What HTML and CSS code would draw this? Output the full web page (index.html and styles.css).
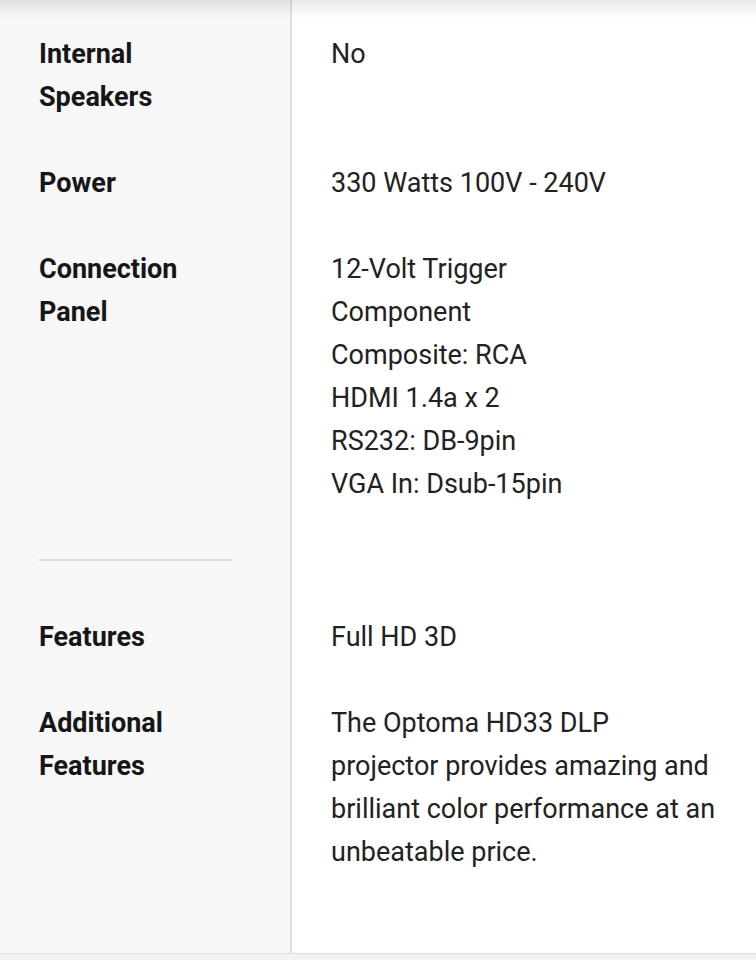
FILE: index.html
```html
<!DOCTYPE html>
<html lang="en">
<head>
<meta charset="utf-8">
<title>Specifications</title>
<link rel="stylesheet" href="styles.css">
</head>
<body>
<div class="specs">
  <div class="row first">
    <div class="label">Internal<br>Speakers</div>
    <div class="value">No</div>
  </div>
  <div class="row">
    <div class="label">Power</div>
    <div class="value">330 Watts 100V - 240V</div>
  </div>
  <div class="row">
    <div class="label">Connection<br>Panel</div>
    <div class="value">12-Volt Trigger<br>Component<br>Composite: RCA<br>HDMI 1.4a x 2<br>RS232: DB-9pin<br>VGA In: Dsub-15pin</div>
  </div>
  <div class="row divider-row">
    <div class="label"><div class="divider"></div></div>
    <div class="value"></div>
  </div>
  <div class="row">
    <div class="label">Features</div>
    <div class="value">Full HD 3D</div>
  </div>
  <div class="row last">
    <div class="label">Additional<br>Features</div>
    <div class="value">The Optoma HD33 DLP projector provides amazing and brilliant color performance at an unbeatable price.</div>
  </div>
</div>
</body>
</html>
```
FILE: styles.css
```css
html, body {
  margin: 0;
  padding: 0;
  background: #f2f2f2;
}
body {
  font-family: Roboto, "Noto Sans", "Liberation Sans", sans-serif;
  font-size: 27px;
  line-height: 43px;
  color: #222;
}
.specs {
  position: relative;
  background: #fff;
  border-bottom: 1px solid #dcdcdc;
  height: 954px;
  box-sizing: border-box;
  display: flex;
  flex-direction: column;
}
.specs::before {
  content: "";
  position: absolute;
  left: 0;
  right: 0;
  top: 0;
  height: 18px;
  background: linear-gradient(to bottom, rgba(0,0,0,0.09), rgba(0,0,0,0));
  pointer-events: none;
}
.row {
  display: grid;
  grid-template-columns: 292px 1fr;
}
.row.last {
  flex: 1;
}
.label {
  background: #f7f7f7;
  border-right: 2px solid #e0e0e0;
  padding: 0 30px 43px 39px;
  font-weight: 700;
  color: #161616;
}
.value {
  padding: 0 34px 43px 39px;
  color: #222;
}
.row.first .label,
.row.first .value {
  padding-top: 33px;
}
.divider-row .label,
.divider-row .value {
  padding-top: 10px;
  padding-bottom: 55px;
}
.divider {
  width: 193px;
  height: 2px;
  background: #dedede;
}
```
